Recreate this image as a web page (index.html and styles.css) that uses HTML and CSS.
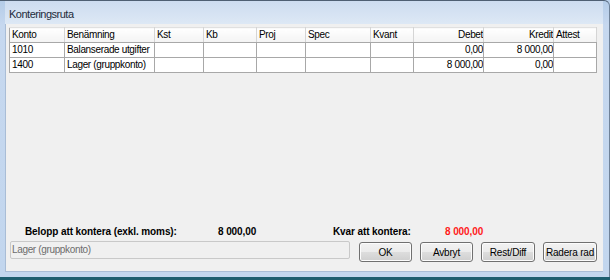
FILE: index.html
```html
<!DOCTYPE html>
<html lang="sv">
<head>
  <meta charset="UTF-8">
  <title>Konteringsruta</title>
  <link rel="stylesheet" href="styles.css">
</head>
<body>
  <div class="window">
    <div class="titlebar">Konteringsruta</div>
    <div class="client">
      <table class="grid">
        <colgroup>
          <col class="c-konto">
          <col class="c-ben">
          <col class="c-kst">
          <col class="c-kb">
          <col class="c-proj">
          <col class="c-spec">
          <col class="c-kvant">
          <col class="c-debet">
          <col class="c-kredit">
          <col class="c-attest">
        </colgroup>
        <thead>
          <tr>
            <th>Konto</th>
            <th>Benämning</th>
            <th>Kst</th>
            <th>Kb</th>
            <th>Proj</th>
            <th>Spec</th>
            <th>Kvant</th>
            <th class="num">Debet</th>
            <th class="num">Kredit</th>
            <th>Attest</th>
          </tr>
        </thead>
        <tbody>
          <tr>
            <td>1010</td>
            <td>Balanserade utgifter</td>
            <td></td><td></td><td></td><td></td><td></td>
            <td class="num">0,00</td>
            <td class="num">8 000,00</td>
            <td></td>
          </tr>
          <tr>
            <td>1400</td>
            <td>Lager (gruppkonto)</td>
            <td></td><td></td><td></td><td></td><td></td>
            <td class="num">8 000,00</td>
            <td class="num">0,00</td>
            <td></td>
          </tr>
        </tbody>
      </table>

      <div class="summary">
        <span class="lbl">Belopp att kontera (exkl. moms):</span>
        <span class="val">8 000,00</span>
        <span class="lbl">Kvar att kontera:</span>
        <span class="val red">8 000,00</span>
      </div>

      <div class="actions">
        <div class="info">Lager (gruppkonto)</div>
        <button class="btn b-ok">OK</button>
        <button class="btn b-avb">Avbryt</button>
        <button class="btn b-rest">Rest/Diff</button>
        <button class="btn b-rad">Radera rad</button>
      </div>
    </div>
  </div>
  <div class="desk"></div>
</body>
</html>
```

FILE: styles.css
```css
html, body {
  margin: 0;
  height: 280px;
  overflow: hidden;
}
body {
  font-family: "Liberation Sans", Arial, sans-serif;
  font-size: 10px;
  letter-spacing: -0.35px;
  color: #000;
  background-color: #bcd2ec;
  display: flex;
  flex-direction: column;
}
.window {
  height: 277px;
  box-sizing: border-box;
  border-top: 1px solid #4f5f73;
  border-right: 1px solid #6f8299;
  border-radius: 0 6px 0 0;
  background: linear-gradient(#b4cce8, #c6d8ef 24px, #c2d6ee);
  display: flex;
  flex-direction: column;
  padding: 0 6px 5px 5px;
}
.titlebar {
  height: 23px;
  line-height: 26px;
  padding-left: 4px;
  font-size: 11px;
  letter-spacing: -0.5px;
  color: #1e2b3b;
  background: linear-gradient(#cddcf0, #dde8f5);
}
.client {
  flex: 1;
  background-color: #f0f0f0;
  border-left: 1px solid #a9bdd6;
  border-bottom: 1px solid #a9bdd6;
  display: flex;
  flex-direction: column;
  padding: 3px 0 9px 3px;
}
.grid {
  border-collapse: collapse;
  table-layout: fixed;
  width: 587px;
  background-color: #fff;
}
.c-konto { width: 55px; }
.c-ben { width: 90px; }
.c-kst { width: 49px; }
.c-kb { width: 53px; }
.c-proj { width: 49px; }
.c-spec { width: 65px; }
.c-kvant { width: 43px; }
.c-debet { width: 70px; }
.c-kredit { width: 70px; }
.c-attest { width: 43px; }
.grid th,
.grid td {
  height: 14px;
  padding: 0 1px 0 2px;
  text-align: left;
  font-weight: normal;
  white-space: nowrap;
  overflow: hidden;
  border-right: 1px solid #a8a8a8;
  border-bottom: 1px solid #a8a8a8;
  line-height: 14px;
}
.grid th {
  background: linear-gradient(#ffffff, #f3f3f3);
  border-right: 1px solid #d5d5d5;
  border-bottom: 1px solid #a8a8a8;
  border-top: 1px solid #e0e0e0;
}
.grid td:first-child,
.grid th:first-child {
  border-left: 1px solid #a8a8a8;
}
.grid .num {
  text-align: right;
  padding-right: 0;
}
.summary {
  margin-top: auto;
  display: grid;
  grid-template-columns: 193px 115px 112px auto;
  padding-left: 16px;
  font-weight: bold;
  letter-spacing: -0.1px;
  line-height: 14px;
  margin-bottom: 2px;
}
.red {
  color: #ff1a1a;
}
.actions {
  display: flex;
  align-items: flex-start;
  gap: 8px;
  padding-left: 1px;
}
.info {
  width: 337px;
  height: 16px;
  line-height: 16px;
  border: 1px solid #c9c9c9;
  border-radius: 2px;
  background-color: #f0f0f0;
  color: #6d6d6d;
  padding-left: 1px;
  margin-right: 1px;
}
.btn {
  height: 20px;
  margin-top: 1px;
  border: 1px solid #707070;
  border-radius: 3px;
  background: linear-gradient(#f2f2f2 0%, #ebebeb 50%, #dddddd 51%, #cfcfcf 100%);
  font-family: inherit;
  font-size: 10px;
  letter-spacing: -0.2px;
  white-space: nowrap;
  color: #000;
  padding: 0;
  box-shadow: inset 0 0 0 1px #fcfcfc;
}
.b-ok { width: 53px; }
.b-avb { width: 53px; }
.b-rest { width: 54px; }
.b-rad { width: 54px; }
.desk {
  flex: 1;
  background-color: #1d5e6f;
}
```
